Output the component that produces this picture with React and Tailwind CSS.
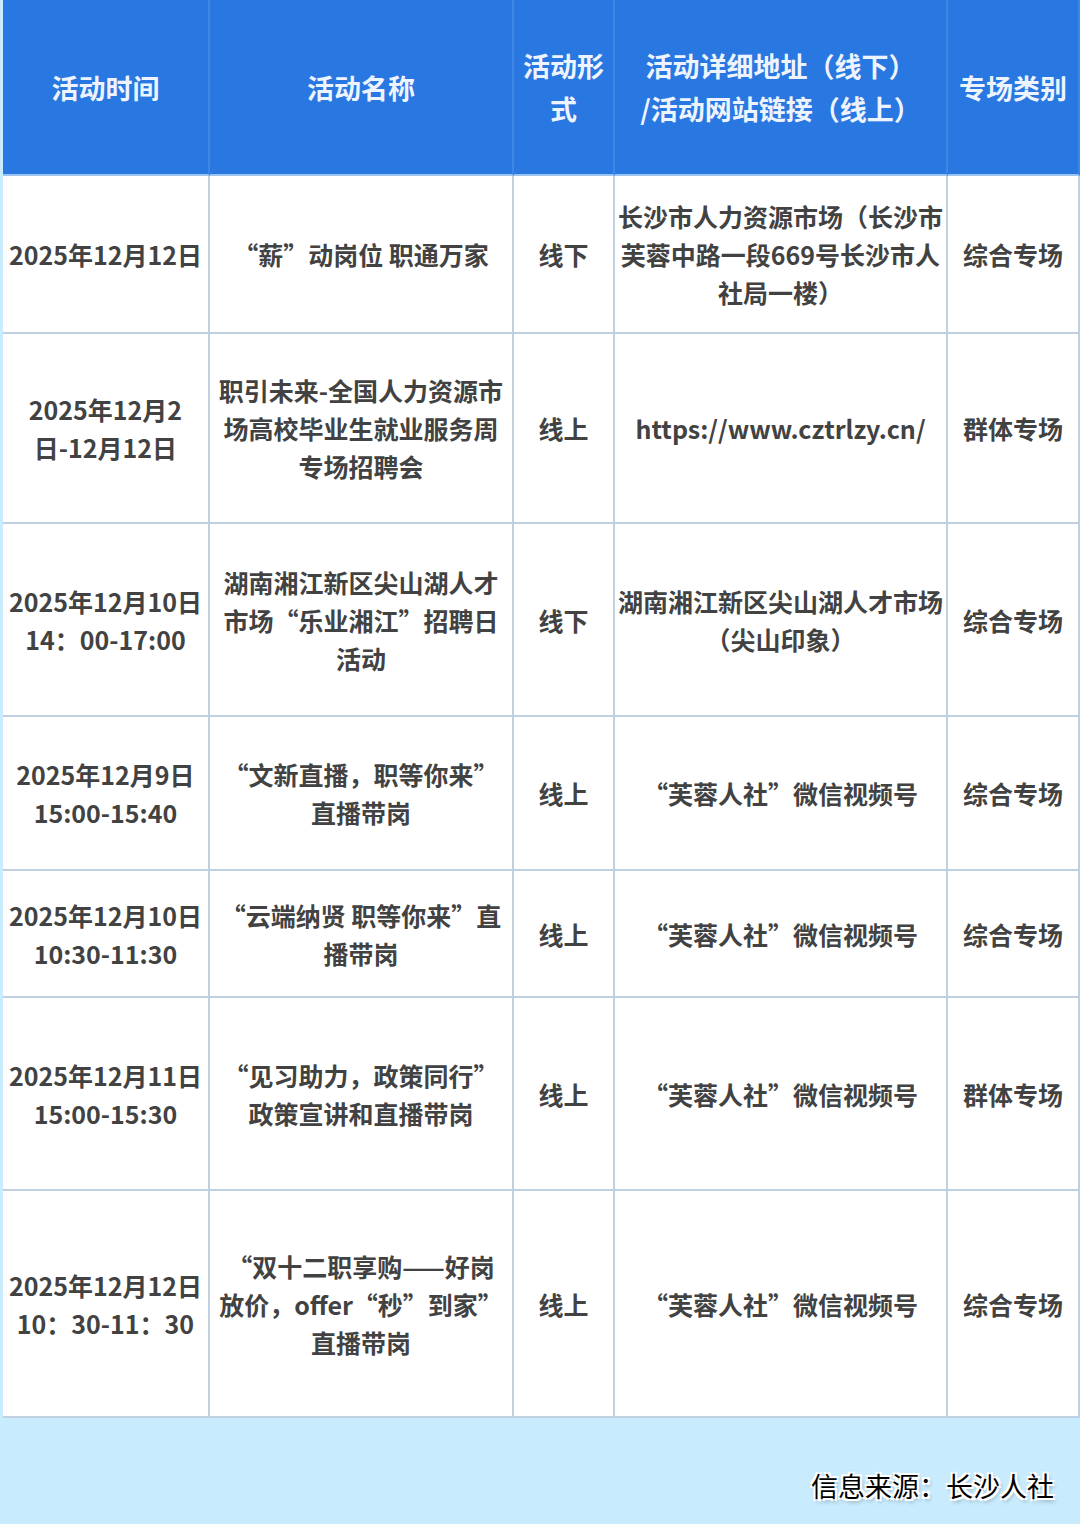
const FONT = { fontFamily: '"Noto Sans CJK SC", "Noto Sans", sans-serif' };

const HEAD = [
    ['活动时间'],
    ['活动名称'],
    ['活动形', '式'],
    ['活动详细地址（线下）', '/活动网站链接（线上）'],
    ['专场类别'],
];

// each row: [height, date lines, name lines, form, address lines, category]
const ROWS = [
    [158, ['2025年12月12日'], ['“薪”动岗位 职通万家'], '线下', ['长沙市人力资源市场（长沙市', '芙蓉中路一段669号长沙市人', '社局一楼）'], '综合专场'],
    [190, ['2025年12月2', '日-12月12日'], ['职引未来-全国人力资源市', '场高校毕业生就业服务周', '专场招聘会'], '线上', ['https://www.cztrlzy.cn/'], '群体专场'],
    [193, ['2025年12月10日', '14：00-17:00'], ['湖南湘江新区尖山湖人才', '市场“乐业湘江”招聘日', '活动'], '线下', ['湖南湘江新区尖山湖人才市场', '（尖山印象）'], '综合专场'],
    [154, ['2025年12月9日', '15:00-15:40'], ['“文新直播，职等你来”', '直播带岗'], '线上', ['“芙蓉人社”微信视频号'], '综合专场'],
    [127, ['2025年12月10日', '10:30-11:30'], ['“云端纳贤 职等你来”直', '播带岗'], '线上', ['“芙蓉人社”微信视频号'], '综合专场'],
    [193, ['2025年12月11日', '15:00-15:30'], ['“见习助力，政策同行”', '政策宣讲和直播带岗'], '线上', ['“芙蓉人社”微信视频号'], '群体专场'],
    [227, ['2025年12月12日', '10：30-11：30'], ['“双十二职享购——好岗', '放价，offer“秒”到家”', '直播带岗'], '线上', ['“芙蓉人社”微信视频号'], '综合专场'],
];

const COLS = "grid grid-cols-[207px_304px_101px_333px_132px]";

const Lines = ({ lines }) => (
    <>
        {lines.map((l, i) => (
            <div key={i} className="whitespace-nowrap">{l}</div>
        ))}
    </>
);

const BodyCell = ({ lines }) => (
    <div className="flex flex-col items-center justify-center border-r-2 border-b-2 border-[#bfd0e1] bg-white text-center text-[25px] leading-[38px] font-semibold text-[#424242]">
        <Lines lines={lines} />
    </div>
);

export default function App() {
    return (
        <div className="min-h-screen w-[1080px] bg-[#c8ebfd]" style={FONT}>
            <div className="pl-[3px]">
                {/* header */}
                <div className={`${COLS} h-[176px]`}>
                    {HEAD.map((lines, i) => (
                        <div
                            key={i}
                            className="flex flex-col items-center justify-center border-r-2 border-b-2 border-r-[#3d86e6] border-b-[#9cc4f0] bg-[#2977e0] text-center text-[27px] leading-[43px] font-bold text-[#eef4ff]"
                        >
                            <Lines lines={lines} />
                        </div>
                    ))}
                </div>

                {/* rows */}
                {ROWS.map(([h, date, name, form, addr, cat], i) => (
                    <div key={i} className={COLS} style={{ height: h }}>
                        <BodyCell lines={date} />
                        <BodyCell lines={name} />
                        <BodyCell lines={[form]} />
                        <BodyCell lines={addr} />
                        <BodyCell lines={[cat]} />
                    </div>
                ))}
            </div>

            {/* source */}
            <div className="flex h-[106px] items-start justify-end pr-[26px] pt-[50px]">
                <span
                    className="text-[27px] leading-[36px] text-black"
                    style={{ textShadow: '1px 0 0 #fff, -1px 0 0 #fff, 0 1px 0 #fff, 0 -1px 0 #fff, 2px 2px 0 #fff, -2px -2px 0 #fff, 2px -2px 0 #fff, -2px 2px 0 #fff, 2px 3px 4px rgba(0,0,0,0.35)' }}
                >
                    信息来源：长沙人社
                </span>
            </div>
        </div>
    );
}
